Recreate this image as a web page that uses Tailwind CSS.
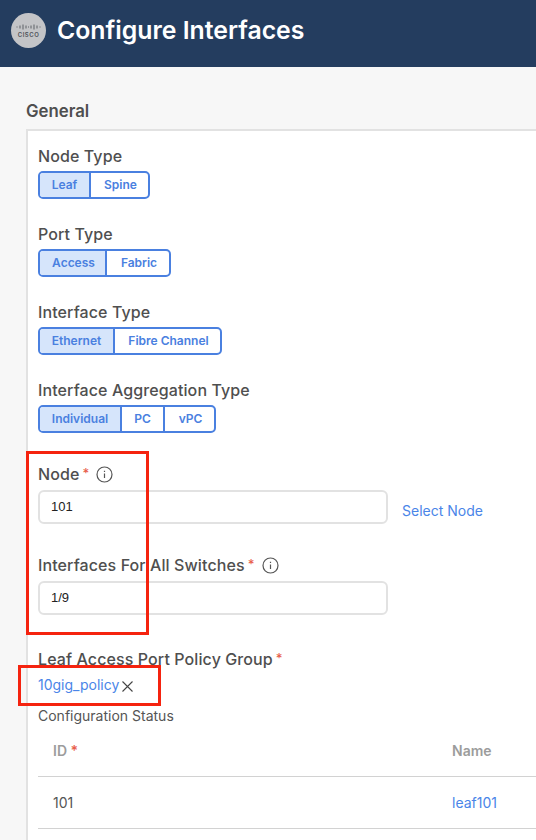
<!DOCTYPE html>
<html lang="en">
<head>
    <meta charset="UTF-8">
    <meta name="viewport" content="width=device-width, initial-scale=1.0">
    <title>Configure Interfaces</title>
    <script src="https://cdn.jsdelivr.net/npm/@tailwindcss/browser@4"></script>
</head>
<body class="bg-[#f7f7f7] font-['Inter',sans-serif] overflow-hidden">
    <div class="relative w-[536px] h-[840px] overflow-hidden">
        <header class="h-[67px] bg-[#243d5f] flex items-center pl-[11px] pb-[7px] gap-[11px]">
            <div class="w-[35px] h-[35px] rounded-full bg-[#c3c4c7] flex flex-col items-center justify-center">
                <svg width="25" height="8" viewBox="0 0 25 8" fill="none" stroke="#5c6066" stroke-width="1">
                    <path d="M1 3.5v1M4 2.5v3M7 1.500v5M10 2.500v3M12.500 3.500v1M15 2.500v3M18 1.500v5M21 2.500v3M24 3.500v1"/>
                </svg>
                <span class="text-[6px] leading-[7px] font-semibold text-[#4d5157] tracking-[0.5px]">CISCO</span>
            </div>
            <h1 class="text-[24.8px] leading-[30px] font-semibold text-white">Configure Interfaces</h1>
        </header>

        <main class="pl-[26px] pt-[34px]">
            <h2 class="text-[16.8px] leading-[20px] font-semibold text-[#4f4f4f]">General</h2>
            <section class="mt-[8px] bg-white border-l-2 border-t-2 border-[#e2e2e2] pl-[10px] h-[720px]">
                <div class="pt-[16px]">
                    <div class="text-[16px] tracking-[0.1px] leading-[18px] font-medium text-[#4f4f4f]">Node Type</div>
                    <div class="mt-[6px] flex h-[28px] w-fit border-2 border-[#4a80e0] rounded-[5px] text-[12px] font-semibold text-[#4a80e0] overflow-hidden">
                        <span class="w-[51px] flex items-center justify-center bg-[#d6e5fb] border-r-2 border-[#4a80e0]">Leaf</span>
                        <span class="w-[57px] pl-[2px] flex items-center justify-center">Spine</span>
                    </div>
                </div>
                <div class="mt-[26px]">
                    <div class="text-[16px] tracking-[0.1px] leading-[18px] font-medium text-[#4f4f4f]">Port Type</div>
                    <div class="mt-[6px] flex h-[28px] w-fit border-2 border-[#4a80e0] rounded-[5px] text-[12px] font-semibold text-[#4a80e0] overflow-hidden">
                        <span class="w-[67px] pl-[2px] flex items-center justify-center bg-[#d6e5fb] border-r-2 border-[#4a80e0]">Access</span>
                        <span class="w-[62px] pl-[2px] flex items-center justify-center">Fabric</span>
                    </div>
                </div>
                <div class="mt-[26px]">
                    <div class="text-[16px] tracking-[0.1px] leading-[18px] font-medium text-[#4f4f4f]">Interface Type</div>
                    <div class="mt-[6px] flex h-[28px] w-fit border-2 border-[#4a80e0] rounded-[5px] text-[12px] font-semibold text-[#4a80e0] overflow-hidden">
                        <span class="w-[75px] flex items-center justify-center bg-[#d6e5fb] border-r-2 border-[#4a80e0]">Ethernet</span>
                        <span class="w-[105px] pl-[2px] flex items-center justify-center">Fibre Channel</span>
                    </div>
                </div>
                <div class="mt-[26px]">
                    <div class="text-[16px] tracking-[0.1px] leading-[18px] font-medium text-[#4f4f4f]">Interface Aggregation Type</div>
                    <div class="mt-[6px] flex h-[28px] w-fit border-2 border-[#4a80e0] rounded-[5px] text-[12px] font-semibold text-[#4a80e0] overflow-hidden">
                        <span class="w-[82px] flex items-center justify-center bg-[#d6e5fb] border-r-2 border-[#4a80e0]">Individual</span>
                        <span class="w-[43px] flex items-center justify-center border-r-2 border-[#4a80e0]">PC</span>
                        <span class="w-[49px] pl-[2px] flex items-center justify-center">vPC</span>
                    </div>
                </div>

                <div class="mt-[32px]">
                    <div class="flex items-center h-[18px] text-[16px] tracking-[0.1px] font-medium text-[#4f4f4f]">
                        Node<span class="ml-[3px] text-[#e8604c] text-[13px]">*</span>
                        <svg class="ml-[7px]" width="17" height="17" viewBox="0 0 17 17" fill="none" stroke="#555555" stroke-width="1.200">
                            <circle cx="8.500" cy="8.500" r="7.500"/>
                            <path d="M8.500 7.500v4.500M8.500 4.800v1.200"/>
                        </svg>
                    </div>
                    <div class="mt-[7px] flex items-center">
                        <div class="w-[350px] h-[34px] border-2 border-[#e2e2e2] rounded-[6px] pl-[11px] flex items-center text-[13px] text-[#222222] font-['Liberation_Sans',sans-serif]">101</div>
                        <span class="ml-[14px] mt-[6px] text-[14px] text-[#4a85e8]">Select Node</span>
                    </div>
                </div>
                <div class="mt-[32px]">
                    <div class="flex items-center h-[18px] text-[16px] tracking-[0.1px] font-medium text-[#4f4f4f]">
                        Interfaces For All Switches<span class="ml-[3px] text-[#e8604c] text-[13px]">*</span>
                        <svg class="ml-[7px]" width="17" height="17" viewBox="0 0 17 17" fill="none" stroke="#555555" stroke-width="1.200">
                            <circle cx="8.500" cy="8.500" r="7.500"/>
                            <path d="M8.500 7.500v4.500M8.500 4.800v1.200"/>
                        </svg>
                    </div>
                    <div class="mt-[7px] w-[350px] h-[34px] border-2 border-[#e2e2e2] rounded-[6px] pl-[11px] flex items-center text-[13px] text-[#222222] font-['Liberation_Sans',sans-serif]">1/9</div>
                </div>
                <div class="mt-[35px]">
                    <div class="flex items-center h-[18px] text-[16px] tracking-[0.1px] font-medium text-[#4f4f4f]">
                        Leaf Access Port Policy Group<span class="ml-[3px] text-[#e8604c] text-[13px]">*</span>
                    </div>
                    <div class="mt-[7px] flex items-center h-[18px]">
                        <span class="text-[14px] text-[#4a85e8]">10gig_policy</span>
                        <svg class="mt-[4px] ml-[2px]" width="13" height="13" viewBox="0 0 13 13" fill="none" stroke="#444444" stroke-width="1.100">
                            <path d="M1.500 1.500l10 10M11.500 1.500l-10 10"/>
                        </svg>
                    </div>
                </div>
                <div class="mt-[14px] text-[14px] leading-[18px] text-[#555555]">Configuration Status</div>
                <table class="w-full text-[14px] border-collapse">
                    <tr class="h-[51px] border-b border-[#d2d2d2]">
                        <th class="w-[414px] pl-[15px] text-left font-semibold text-[#9c9c9c]">ID <span class="text-[#e8604c]">*</span></th>
                        <th class="text-left font-semibold text-[#9c9c9c]">Name</th>
                    </tr>
                    <tr class="h-[52px] border-b border-[#d2d2d2]">
                        <td class="pl-[15px] text-[#555555]">101</td>
                        <td class="text-[#4a85e8]">leaf101</td>
                    </tr>
                </table>
            </section>
        </main>

        <!-- red annotation boxes from the screenshot -->
        <div class="absolute left-[26px] top-[451px] w-[123px] h-[184px] border-[3px] border-[#f5230f]"></div>
        <div class="absolute left-[18px] top-[665px] w-[143px] h-[41px] border-[3px] border-[#f5230f]"></div>
    </div>
</body>
</html>
